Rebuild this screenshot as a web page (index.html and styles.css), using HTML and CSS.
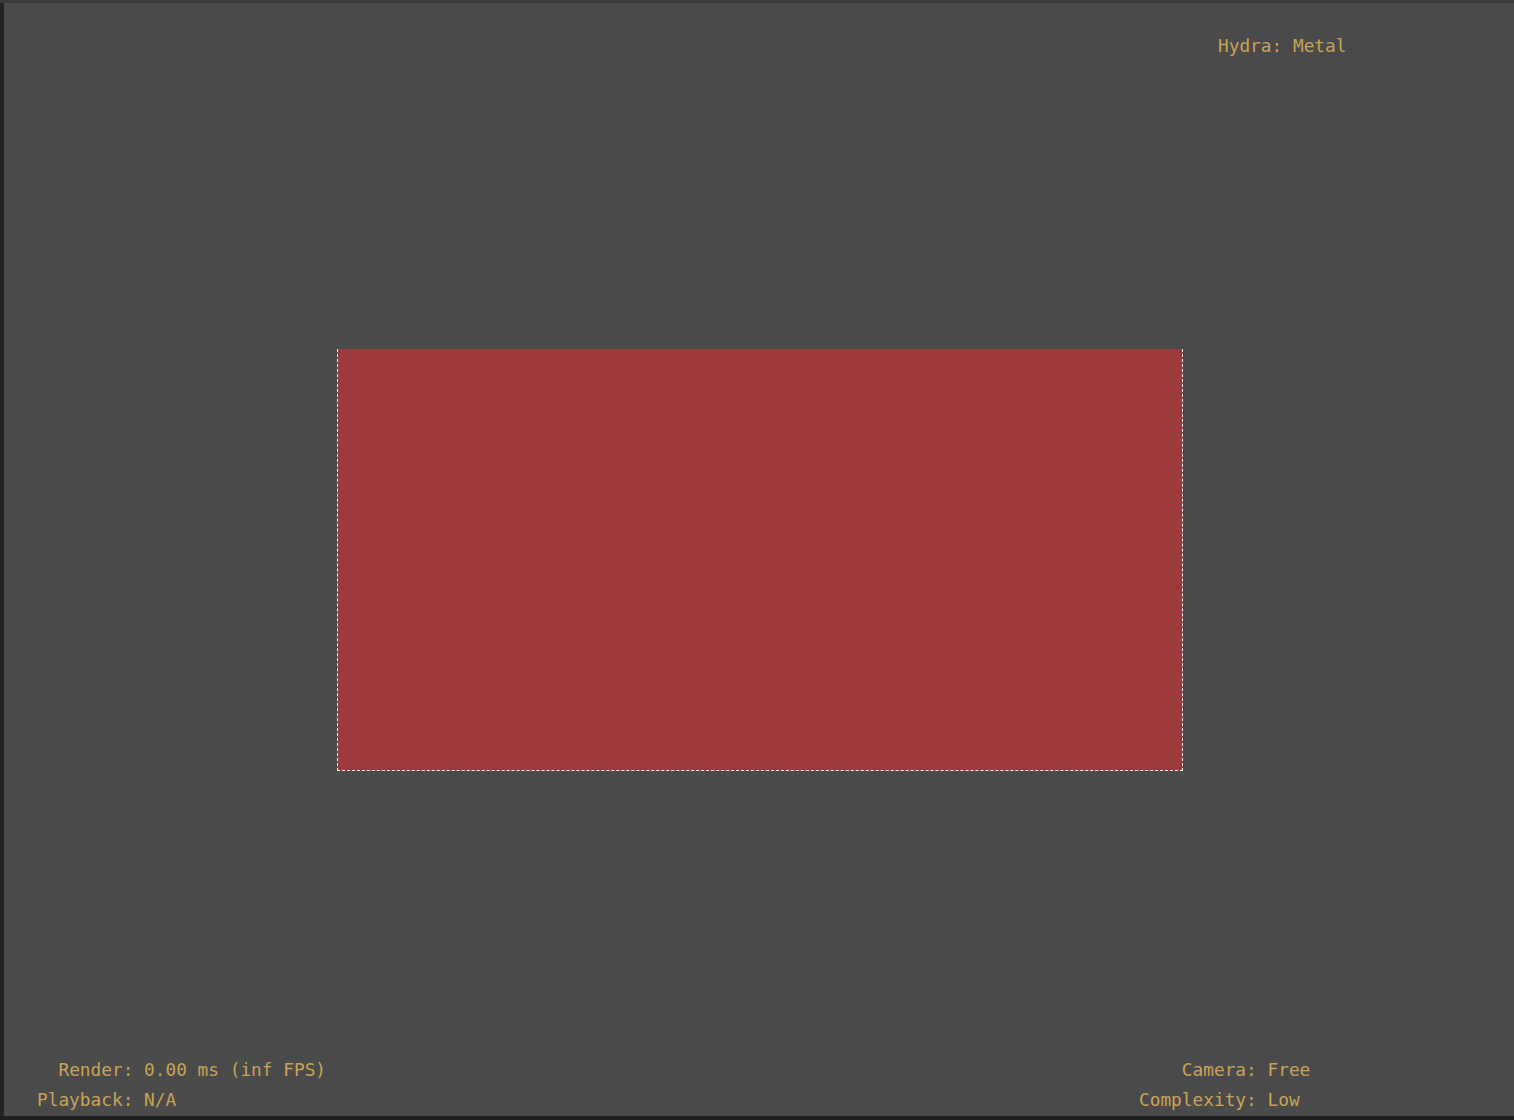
FILE: index.html
```html
<!DOCTYPE html>
<html>
<head>
<meta charset="utf-8">
<link rel="stylesheet" href="styles.css">
</head>
<body>
<div class="frame">
  <div class="topbar"></div>
  <div class="main">
    <div class="leftbar"></div>
    <div class="viewport">
      <div class="rect"></div>
      <div class="hud hud-top">
        <span class="lbl">Hydra:</span><span class="val">Metal</span>
      </div>
      <div class="hud hud-bl">
        <span class="lbl">Render:</span><span class="val">0.00 ms (inf FPS)</span>
        <span class="lbl">Playback:</span><span class="val">N/A</span>
      </div>
      <div class="hud hud-br">
        <span class="lbl">Camera:</span><span class="val">Free</span>
        <span class="lbl">Complexity:</span><span class="val">Low</span>
      </div>
    </div>
  </div>
  <div class="bottombar"></div>
</div>
</body>
</html>
```
FILE: styles.css
```css
html, body {
  margin: 0;
  padding: 0;
  background: #1f1f1f;
}
.frame {
  width: 1514px;
  height: 1120px;
  display: flex;
  flex-direction: column;
}
.topbar {
  height: 3px;
  background: #393939;
  flex: none;
}
.main {
  flex: 1;
  display: flex;
}
.leftbar {
  width: 4px;
  background: #232323;
  flex: none;
}
.viewport {
  flex: 1;
  position: relative;
  background: #4a4a4a;
  display: flex;
  align-items: center;
  justify-content: center;
}
.bottombar {
  height: 4px;
  background: #1e1e1e;
  flex: none;
}
.rect {
  width: 846px;
  height: 422px;
  margin-left: 2px;
  box-sizing: border-box;
  background: #9d3a3b;
  border-left: 1px dashed #f2f2f2;
  border-right: 1px dashed #f2f2f2;
  border-bottom: 1px dashed #f2f2f2;
}
.hud {
  position: absolute;
  display: grid;
  grid-template-columns: auto auto;
  column-gap: 1ch;
  font-family: "DejaVu Sans Mono", "Liberation Mono", monospace;
  font-size: 17.8px;
  line-height: 30px;
  color: #c8a358;
  white-space: pre;
}
.hud .lbl {
  text-align: right;
}
.hud-top {
  top: 28px;
  left: 1214px;
}
.hud-bl {
  bottom: 1px;
  left: 33px;
}
.hud-br {
  bottom: 1px;
  left: 1135px;
}
```
